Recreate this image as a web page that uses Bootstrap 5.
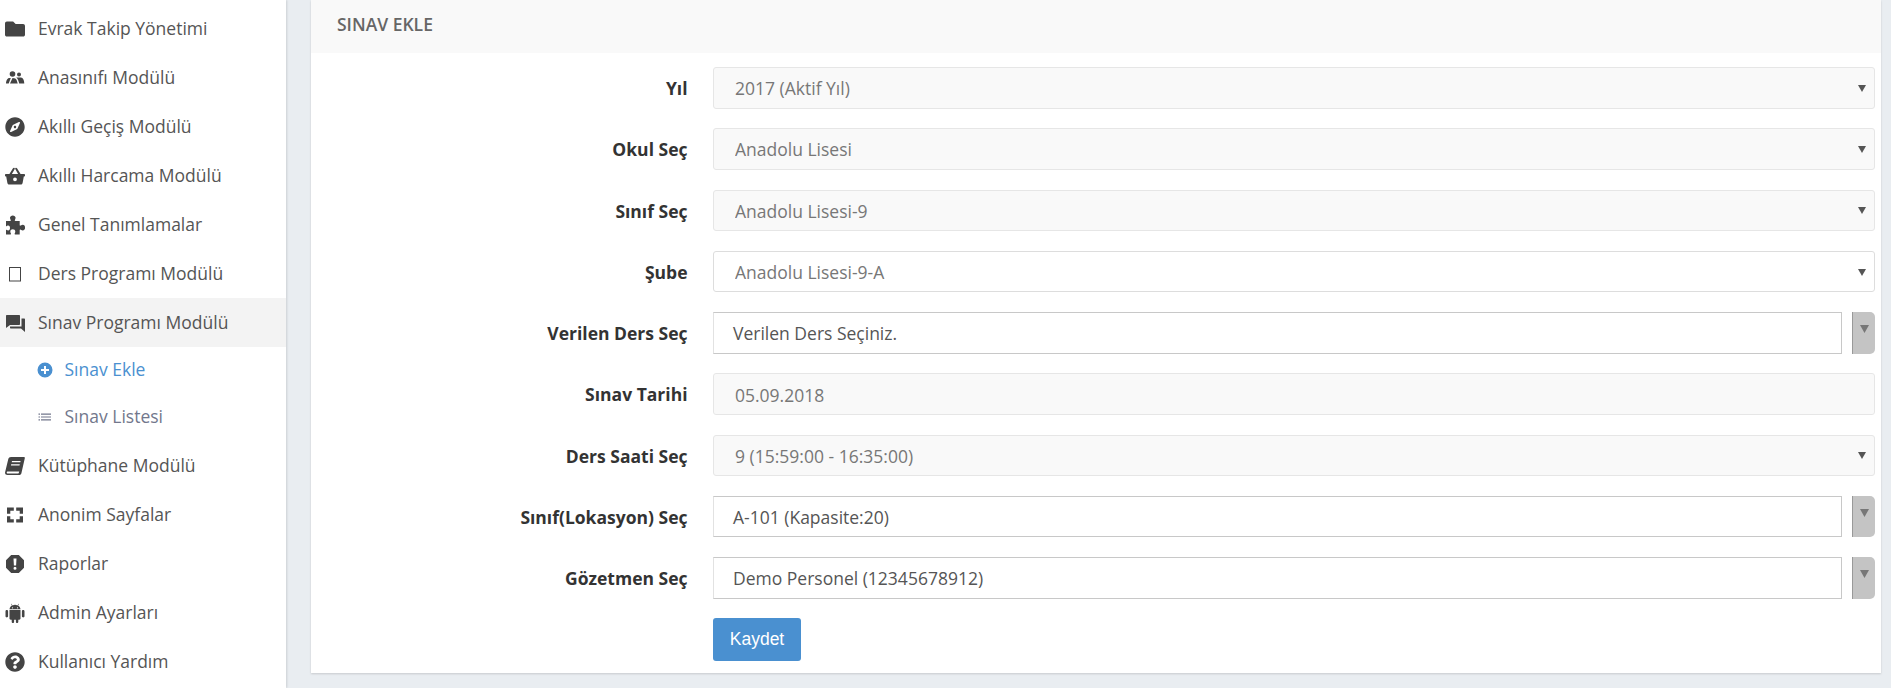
<!DOCTYPE html>
<html lang="tr">
<head>
<meta charset="utf-8">
<title>Sınav Ekle</title>
<link href="https://cdn.jsdelivr.net/npm/bootstrap@5.3.0/dist/css/bootstrap.min.css" rel="stylesheet">
<style>
html,body{height:688px;overflow:hidden}
body{background:#e9edf1;font-family:"Open Sans","Liberation Sans",sans-serif;font-size:17.5px;color:#555}
.side-panel{width:286px;height:688px;background:#fff;box-shadow:1px 0 2px rgba(0,0,0,.12);padding-top:4px;flex:none}
.side-link{height:49px;color:#555;text-decoration:none;padding-left:5px}
.side-link.is-open{background:#f3f3f3}
.side-ico{width:20px;height:20px;margin-right:13px;flex:none;fill:#444}
.sub-link{height:47px;color:#72778c;text-decoration:none;padding-left:37px;padding-bottom:2px}
.sub-link.is-now{color:#4a90d0}
.sub-ico{width:16px;height:16px;margin-right:11.5px;flex:none;fill:currentColor}
.main-pane{padding-left:25px;padding-right:10px}
.form-panel{background:#fff;height:673px;box-shadow:0 1px 2px rgba(0,0,0,.15);border-radius:0}
.panel-top{height:53px;background:#f9f9f9;padding-left:26px;padding-bottom:5px;font-size:17.5px;font-weight:600;color:#666}
.panel-body{padding:14px 6px 0}
.form-line{--bs-gutter-x:26px;--bs-gutter-y:0;height:61.25px;align-items:flex-start}
.form-line label{font-weight:700;color:#333;text-align:right;height:41.5px;line-height:42px;font-size:17.5px;margin:0;padding-right:12.5px}
.fld{height:41.5px;border:1px solid #e6e6e6;border-radius:3px;font-size:17.5px;color:#777;padding:1px 21px 0;line-height:39px;box-shadow:none}
select.fld{background-image:url("data:image/svg+xml,%3Csvg xmlns='http://www.w3.org/2000/svg' viewBox='0 0 8 8'%3E%3Cpath fill='%23555' d='M0 1h8L4 8z'/%3E%3C/svg%3E");background-size:8px 8px;background-position:right 8px center;background-repeat:no-repeat;padding-right:30px}
.fld:disabled{background-color:#f9f9f9;color:#777;opacity:1}
select.fld.open-fld{background-color:#fff;border-color:#ddd}
.pick-box{height:41.5px;flex:1;border:1px solid #c8c8c8;border-left-color:#e2e2e2;font-size:17.5px;color:#555;padding:0 19px;line-height:41px}
.pick-arrow{width:23px;height:41.5px;margin-left:10px;background:#c4c4c4;border-left:1px solid #999;border-radius:0 5px 5px 0;flex:none}
.pick-arrow svg{width:9px;height:8px;fill:#777;margin-top:-8px}
.save-btn{width:88px;height:43px;background:#4a90d0;border:0;border-radius:3px;color:#fff;font-family:"Liberation Sans",Arial,sans-serif;font-size:17.5px;padding:0 0 2px;font-weight:400}
.save-btn:hover{background:#4a90d0;color:#fff}
</style>
</head>
<body>
<div class="d-flex">
<nav class="side-panel">
  <a class="side-link d-flex align-items-center" href="#"><svg class="side-ico" viewBox="0 0 512 512"><path d="M464 128H272l-64-64H48C21.49 64 0 85.49 0 112v288c0 26.51 21.49 48 48 48h416c26.51 0 48-21.49 48-48V176c0-26.51-21.49-48-48-48z"/></svg>Evrak Takip Yönetimi</a>
  <a class="side-link d-flex align-items-center" href="#"><svg class="side-ico" viewBox="0 0 20 20"><circle cx="7.500" cy="6" r="2.800"/><circle cx="14" cy="6.500" r="2"/><path d="M1 15.500c.1-3 1.300-5.500 3.500-5.500h1.300L3.700 15.500zM5 15.500 7.500 10c2.300 0 3.700.8 4.200 2.300l1 3.200zM11.200 9.500h4.800c2 0 3.100 2.500 3.300 6h-5.100c-.5-2.500-1.500-4.800-3-6z"/></svg>Anasınıfı Modülü</a>
  <a class="side-link d-flex align-items-center" href="#"><svg class="side-ico" viewBox="0 0 496 512"><path d="M225.38 233.37c-12.5 12.5-12.5 32.76 0 45.25 12.49 12.5 32.76 12.5 45.25 0 12.5-12.5 12.5-32.76 0-45.25-12.5-12.49-32.76-12.49-45.25 0zM248 8C111.03 8 0 119.03 0 256s111.03 248 248 248 248-111.03 248-248S384.97 8 248 8zm126.14 148.05L308.17 300.4a31.938 31.938 0 0 1-15.77 15.77l-144.34 65.97c-16.65 7.61-33.81-9.55-26.2-26.2l65.98-144.35a31.938 31.938 0 0 1 15.77-15.77l144.34-65.97c16.65-7.6 33.8 9.55 26.19 26.2z"/></svg>Akıllı Geçiş Modülü</a>
  <a class="side-link d-flex align-items-center" href="#"><svg class="side-ico" viewBox="0 0 20 20"><path fill-rule="evenodd" d="M.8 8h3.600L8 2.300c.4-.6 1-.7 1.400-.4.5.3.600.9.200 1.400L6.900 8h6.200l-2.700-4.700c-.4-.5-.3-1.100.2-1.400.4-.3 1-.2 1.400.4L15.600 8h3.600c.5 0 .8.3.8.8v1c0 .5-.3.8-.8.8h-.4L17.600 17c-.1.900-.8 1.500-1.700 1.500H4.100c-.9 0-1.600-.6-1.700-1.500L1.200 10.600H.8c-.5 0-.8-.3-.8-.8v-1c0-.5.300-.8.800-.8zM10 11.400a1.900 1.900 0 1 0 0 3.800 1.900 1.900 0 0 0 0-3.800z"/></svg>Akıllı Harcama Modülü</a>
  <a class="side-link d-flex align-items-center" href="#"><svg class="side-ico" viewBox="0 0 20 20"><path d="M1 6h4.200c.6 0 .8-.4.500-1C5.200 4 5 3.400 5 2.800 5 1.300 6.300.4 7.800.4s2.800.9 2.800 2.400c0 .6-.3 1.200-.7 2.200-.3.600-.1 1 .5 1h4.300v4c0 .6.400.8 1 .5.900-.5 1.500-.7 2.100-.7 1.500 0 2.300 1.300 2.300 2.800s-.8 2.800-2.300 2.800c-.6 0-1.200-.3-2.100-.7-.6-.3-1-.1-1 .5V19.500h-4.500c-.6 0-.8-.4-.5-1 .4-.9.600-1.500.6-2.100 0-1.300-1.200-2.200-2.500-2.200s-2.500.9-2.500 2.200c0 .6.200 1.200.6 2.100.3.600.1 1-.5 1H1v-5c1 .6 1.500.9 2.200.9 1.200 0 1.800-1 1.800-2.400s-.6-2.400-1.800-2.400c-.7 0-1.200.3-2.200.9z"/></svg>Genel Tanımlamalar</a>
  <a class="side-link d-flex align-items-center" href="#"><svg class="side-ico" viewBox="0 0 20 20"><path fill-rule="evenodd" d="M4 3h12v14.500H4zM5 4v12.500h10V4z"/></svg>Ders Programı Modülü</a>
  <a class="side-link is-open d-flex align-items-center" href="#"><svg class="side-ico" viewBox="0 0 20 20"><path d="M1 2h13c.6 0 1 .4 1 1v8c0 .6-.4 1-1 1H5l-4 3V3c0-.6.4-1 1-1zM16.500 5.500H19c.6 0 1 .4 1 1V19l-4-3.500H6c-.6 0-1-.4-1-1v-1h11.500z"/></svg>Sınav Programı Modülü</a>
  <a class="sub-link is-now d-flex align-items-center" href="#"><svg class="sub-ico" viewBox="0 0 16 16"><path fill-rule="evenodd" d="M8 .5a7.500 7.500 0 1 1 0 15 7.500 7.500 0 0 1 0-15zM7 4v3H4v2h3v3h2V9h3V7H9V4z"/></svg>Sınav Ekle</a>
  <a class="sub-link d-flex align-items-center" href="#"><svg class="sub-ico" viewBox="0 0 16 16"><path d="M1.500 4.500h1.500v1.200H1.500zM4 4.500h10v1.200H4zM1.500 7.400h1.500v1.200H1.500zM4 7.400h10v1.200H4zM1.500 10.300h1.500v1.200H1.500zM4 10.300h10v1.200H4z"/></svg>Sınav Listesi</a>
  <a class="side-link d-flex align-items-center" href="#"><svg class="side-ico" viewBox="0 0 20 20"><path fill-rule="evenodd" d="M6 1h13c.7 0 1 .5.8 1.200l-3.400 15c-.3 1.200-1.100 1.800-2.300 1.800H2.500C.9 19-.2 17.900.1 16.200L3.300 3C3.600 1.700 4.600 1 6 1zM7 5l-.3 1.300h8.600L15.600 5zM6.200 8.200l-.3 1.300h8.600l.3-1.300zM3 15.500c-1 0-1.300.5-1.300 1s.4 1 1.200 1h10.500c.5-.6.700-1.300.8-2z"/></svg>Kütüphane Modülü</a>
  <a class="side-link d-flex align-items-center" href="#"><svg class="side-ico" viewBox="0 0 20 20"><path d="M2 2.500h6.800v3.300H5.300v3H2zM11.200 2.500H18v6.300h-3.300v-3h-3.500zM2 11.200h3.300v3h3.500v3.300H2zM14.700 11.200H18v6.300h-6.800v-3.300h3.500z"/></svg>Anonim Sayfalar</a>
  <a class="side-link d-flex align-items-center" href="#"><svg class="side-ico" viewBox="0 0 20 20"><path fill-rule="evenodd" d="M6.200 1h7.600L19 6.200v7.600L13.800 19H6.200L1 13.800V6.200zM8.500 4.500l.4 7h2.200l.4-7zM10 12.700a1.500 1.500 0 1 0 0 3 1.500 1.500 0 0 0 0-3z"/></svg>Raporlar</a>
  <a class="side-link d-flex align-items-center" href="#"><svg class="side-ico" viewBox="0 0 20 20"><path fill-rule="evenodd" d="M4.500 7h11v8.500c0 .7-.5 1.200-1.200 1.200h-1v2c0 .7-.5 1.300-1.200 1.300s-1.200-.6-1.200-1.300v-2H9.100v2c0 .7-.5 1.300-1.200 1.300s-1.200-.6-1.200-1.300v-2h-1c-.7 0-1.200-.5-1.200-1.200zM1.800 7c.7 0 1.300.5 1.300 1.200v5c0 .7-.6 1.200-1.300 1.200S.5 13.900.5 13.200v-5C.5 7.500 1.100 7 1.800 7zM18.200 7c.7 0 1.300.5 1.300 1.200v5c0 .7-.6 1.200-1.300 1.200s-1.300-.5-1.300-1.200v-5c0-.7.600-1.200 1.300-1.200zM4.500 6.300C4.700 4.500 5.700 3.300 7 2.600L6 1l.4-.3 1.100 1.700a6 6 0 0 1 5 0L13.600.7 14 1l-1 1.600c1.300.7 2.300 1.900 2.500 3.700zM7.500 4.200a.6.6 0 1 0 0 1.200.6.6 0 0 0 0-1.200zM12.500 4.200a.6.6 0 1 0 0 1.200.6.6 0 0 0 0-1.200z"/></svg>Admin Ayarları</a>
  <a class="side-link d-flex align-items-center" href="#"><svg class="side-ico" viewBox="0 0 512 512"><path d="M504 256c0 136.997-111.043 248-248 248S8 392.997 8 256C8 119.083 119.043 8 256 8s248 111.083 248 248zM262.655 90c-54.497 0-89.255 22.957-116.549 63.758-3.536 5.286-2.353 12.415 2.715 16.258l34.699 26.31c5.205 3.947 12.621 3.008 16.665-2.122 17.864-22.658 30.113-35.797 57.303-35.797 20.429 0 45.698 13.148 45.698 32.958 0 14.976-12.363 22.667-32.534 33.976C247.128 238.528 216 254.941 216 296v4c0 6.627 5.373 12 12 12h56c6.627 0 12-5.373 12-12v-1.333c0-28.462 83.186-29.647 83.186-106.667 0-58.002-60.165-102-116.531-102zM256 338c-25.365 0-46 20.635-46 46 0 25.364 20.635 46 46 46s46-20.636 46-46c0-25.365-20.635-46-46-46z"/></svg>Kullanıcı Yardım</a>
</nav>
<main class="main-pane flex-grow-1">
  <div class="form-panel">
    <div class="panel-top d-flex align-items-center">SINAV EKLE</div>
    <form class="panel-body">
      <div class="row form-line"><label class="col-3">Yıl</label><div class="col-9"><select class="form-select fld" disabled><option>2017 (Aktif Yıl)</option></select></div></div>
      <div class="row form-line"><label class="col-3">Okul Seç</label><div class="col-9"><select class="form-select fld" disabled><option>Anadolu Lisesi</option></select></div></div>
      <div class="row form-line"><label class="col-3">Sınıf Seç</label><div class="col-9"><select class="form-select fld" disabled><option>Anadolu Lisesi-9</option></select></div></div>
      <div class="row form-line"><label class="col-3">Şube</label><div class="col-9"><select class="form-select fld open-fld"><option>Anadolu Lisesi-9-A</option></select></div></div>
      <div class="row form-line"><label class="col-3">Verilen Ders Seç</label><div class="col-9 d-flex"><div class="pick-box">Verilen Ders Seçiniz.</div><div class="pick-arrow d-flex align-items-center justify-content-center"><svg viewBox="0 0 9 8"><path d="M0 0h9L4.500 8z"/></svg></div></div></div>
      <div class="row form-line"><label class="col-3">Sınav Tarihi</label><div class="col-9"><input class="form-control fld" disabled value="05.09.2018"></div></div>
      <div class="row form-line"><label class="col-3">Ders Saati Seç</label><div class="col-9"><select class="form-select fld" disabled><option>9 (15:59:00 - 16:35:00)</option></select></div></div>
      <div class="row form-line"><label class="col-3">Sınıf(Lokasyon) Seç</label><div class="col-9 d-flex"><div class="pick-box">A-101 (Kapasite:20)</div><div class="pick-arrow d-flex align-items-center justify-content-center"><svg viewBox="0 0 9 8"><path d="M0 0h9L4.500 8z"/></svg></div></div></div>
      <div class="row form-line"><label class="col-3">Gözetmen Seç</label><div class="col-9 d-flex"><div class="pick-box">Demo Personel (12345678912)</div><div class="pick-arrow d-flex align-items-center justify-content-center"><svg viewBox="0 0 9 8"><path d="M0 0h9L4.500 8z"/></svg></div></div></div>
      <div class="row form-line"><div class="col-3"></div><div class="col-9"><button type="button" class="btn save-btn">Kaydet</button></div></div>
    </form>
  </div>
</main>
</div>
<script src="https://cdn.jsdelivr.net/npm/bootstrap@5.3.0/dist/js/bootstrap.bundle.min.js"></script>
</body>
</html>
